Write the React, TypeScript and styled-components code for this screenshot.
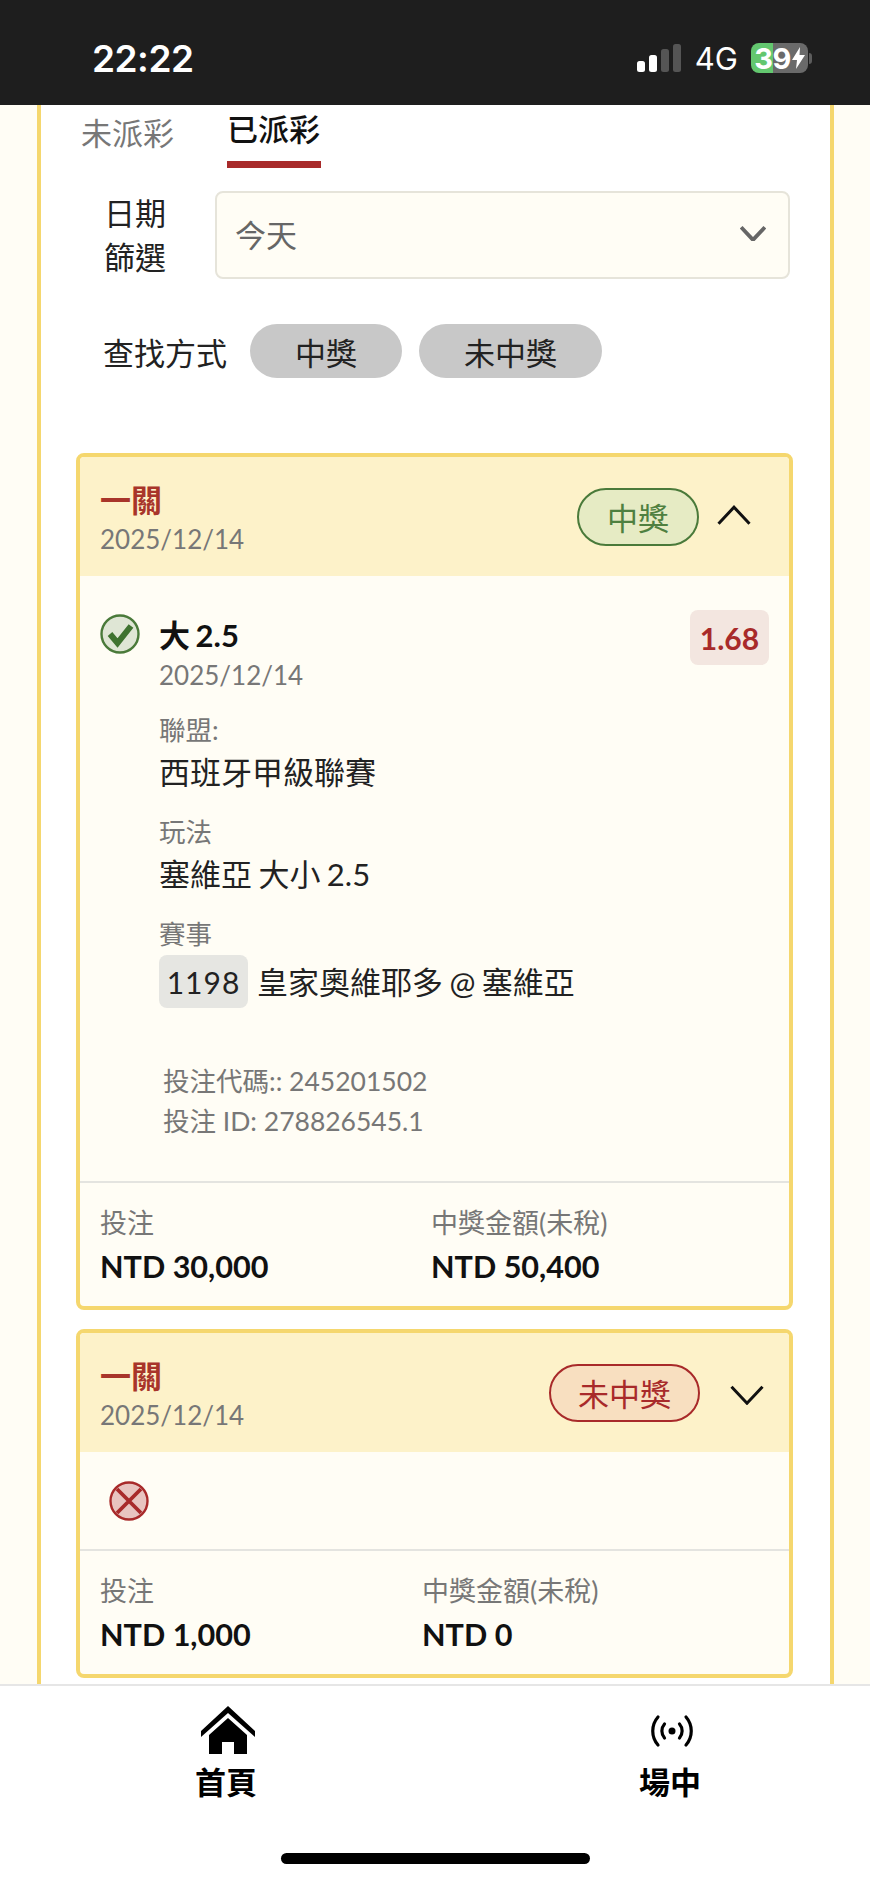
import React from 'react';
import styled, { createGlobalStyle } from 'styled-components';

const GlobalStyle = createGlobalStyle`
    html, body {
        margin: 0;
        padding: 0;
        background: #fffdf5;
    }

    * {
        box-sizing: border-box;
    }
`;

const Page = styled.div`
    width: 870px;
    height: 1882px;
    display: flex;
    flex-direction: column;
    overflow: hidden;
    background: #fffdf5;
    font-family: Lato, "Noto Sans CJK TC", sans-serif;
    color: #111;
`;

const StatusBar = styled.div`
    height: 105px;
    flex: none;
    background: #1e1e1e;
    display: flex;
    align-items: center;
    justify-content: space-between;
    padding: 0 58px 0 92px;
    color: #fff;
    font-family: Inter, "Liberation Sans", sans-serif;
`;

const Clock = styled.div`
    font-size: 37px;
    font-weight: 600;
    letter-spacing: -0.5px;
    margin-top: 11px;
`;

const StatusIcons = styled.div`
    display: flex;
    align-items: center;
    gap: 14px;
    margin-top: 11px;
`;

const NetworkLabel = styled.span`
    font-size: 31px;
    font-weight: 400;
`;

const BatteryWrap = styled.div`
    display: flex;
    align-items: center;
    gap: 1px;
    margin-left: -1px;
`;

const Battery = styled.div`
    width: 57px;
    height: 30px;
    border-radius: 8px;
    background: linear-gradient(90deg, #63c76f 0, #63c76f 39%, #6a6a6a 39%, #6a6a6a 100%);
    display: flex;
    align-items: center;
    justify-content: center;
    font-size: 29px;
    font-weight: 700;
    letter-spacing: -0.5px;
    gap: 1px;
`;

const BatteryNub = styled.div`
    width: 3px;
    height: 11px;
    border-radius: 0 3px 3px 0;
    background: #5c5c5c;
`;

const Main = styled.main`
    flex: 1;
    min-height: 0;
    overflow: hidden;
    padding: 0 36px 0 37px;
`;

const Panel = styled.div`
    height: 100%;
    background: #fff;
    border-left: 4px solid #f5d76e;
    border-right: 4px solid #f5d76e;
`;

const Tabs = styled.div`
    height: 63px;
    display: flex;
    gap: 53px;
    padding-left: 40px;
`;

const Tab = styled.div<{ $active?: boolean }>`
    width: ${p => (p.$active ? '94px' : '93px')};
    height: 63px;
    padding-top: ${p => (p.$active ? '3px' : '7px')};
    font-size: 31px;
    line-height: 42px;
    white-space: nowrap;
    font-weight: ${p => (p.$active ? 500 : 400)};
    color: ${p => (p.$active ? '#111' : '#777')};
    border-bottom: ${p => (p.$active ? '7px solid #a82a2a' : 'none')};
`;

const FilterRow = styled.div`
    margin-top: 23px;
    display: flex;
    align-items: center;
    padding-left: 63px;
    gap: 49px;
`;

const FilterLabel = styled.div`
    width: 62px;
    font-size: 31px;
    line-height: 44px;
    color: #222;
`;

const Select = styled.div`
    width: 575px;
    height: 88px;
    border: 2px solid #e6e4da;
    border-radius: 8px;
    background: #fffdf5;
    display: flex;
    align-items: center;
    justify-content: space-between;
    padding: 0 22px 3px 18px;
    font-size: 31px;
    color: #666;
`;

const SearchRow = styled.div`
    margin-top: 45px;
    display: flex;
    align-items: center;
    padding-left: 62px;
    gap: 17px;
`;

const SearchLabel = styled.div`
    font-size: 31px;
    color: #222;
    margin-right: 6px;
`;

const FilterPill = styled.div<{ $width: number }>`
    width: ${p => p.$width}px;
    height: 54px;
    border-radius: 27px;
    background: #c8c8c8;
    display: flex;
    align-items: center;
    justify-content: center;
    font-size: 31px;
    color: #222;
`;

const CardList = styled.div`
    margin: 75px 37px 0 35px;
    display: flex;
    flex-direction: column;
    gap: 19px;
`;

const Card = styled.section`
    border: 4px solid #f5d76e;
    border-radius: 8px;
    background: #fffdf5;
    overflow: hidden;
`;

const CardHeader = styled.header`
    height: 119px;
    background: #fdf2c9;
    display: flex;
    align-items: center;
    justify-content: space-between;
    padding: 0 0 0 20px;
`;

const HeaderText = styled.div`
    padding-top: 7px;
`;

const CardTitle = styled.div`
    font-size: 31px;
    line-height: 38px;
    font-weight: 700;
    color: #a8352a;
`;

const DateText = styled.div`
    font-size: 26px;
    line-height: 40px;
    color: #777;
`;

const HeaderRight = styled.div<{ $right: number }>`
    display: flex;
    align-items: center;
    gap: ${p => (p.$right === 38 ? 18 : 30)}px;
    padding-right: ${p => p.$right}px;
`;

const ChevronSlot = styled.div<{ $shift: number }>`
    margin-top: ${p => p.$shift}px;
`;

const StatusPill = styled.div<{ $won?: boolean }>`
    width: ${p => (p.$won ? '122px' : '151px')};
    height: 58px;
    border-radius: 29px;
    border: 2px solid ${p => (p.$won ? '#4a7a3a' : '#a82a2a')};
    background: ${p => (p.$won ? '#e6ebc4' : '#f8dfc0')};
    color: ${p => (p.$won ? '#4f8040' : '#a82a2a')};
    display: flex;
    align-items: center;
    justify-content: center;
    font-size: 31px;
`;

const BetBody = styled.div`
    position: relative;
    display: flex;
    gap: 19px;
    padding: 38px 0 40px 20px;
`;

const BetMain = styled.div`
    flex: 1;
`;

const BetTitle = styled.div`
    font-size: 31px;
    line-height: 41px;
    margin-bottom: -1px;
    font-weight: 700;
    word-spacing: -2px;
    padding-top: 1px;
    color: #111;
`;

const InfoLabel = styled.div`
    font-size: 26.5px;
    line-height: 34px;
    color: #777;
    margin-top: 18px;
`;

const InfoValue = styled.div`
    display: flex;
    align-items: center;
    font-size: 31px;
    line-height: 50px;
    word-spacing: -1.5px;
    color: #222;
`;

const EventRow = styled(InfoValue)`
    margin-top: 4px;
`;

const EventChip = styled.span`
    width: 89px;
    height: 53px;
    margin-right: 9px;
    border-radius: 8px;
    background: #e6e6e2;
    display: flex;
    align-items: center;
    justify-content: center;
    font-size: 30px;
    letter-spacing: 1px;
`;

const OddsBadge = styled.div`
    position: absolute;
    top: 34px;
    right: 20px;
    width: 79px;
    height: 55px;
    border-radius: 8px;
    background: #f3e6e0;
    color: #a82a2a;
    font-size: 30px;
    font-weight: 700;
    display: flex;
    align-items: center;
    justify-content: center;
`;

const BetCodes = styled.div`
    margin: 53px 0 0 4px;
    font-size: 26.5px;
    line-height: 40px;
    color: #777;
`;

const LostBody = styled.div`
    height: 97px;
    padding: 29px 0 0 29px;
`;

const CardFooter = styled.footer<{ $column: number }>`
    border-top: 2px solid #e4e4e0;
    display: grid;
    grid-template-columns: ${p => p.$column}px 1fr;
    padding: 19px 20px 15px;
`;

const AmountLabel = styled.div`
    font-size: 27px;
    line-height: 41px;
    color: #777;
`;

const AmountValue = styled.div`
    font-size: 30.6px;
    line-height: 48px;
    font-weight: 700;
    color: #111;
`;

const BottomNav = styled.nav`
    position: relative;
    height: 198px;
    flex: none;
    background: #fff;
    border-top: 2px solid #e6e6e6;
    display: flex;
    padding: 20px 0 0 150px;
`;

const NavItem = styled.div<{ $width: number }>`
    width: ${p => p.$width}px;
    height: 96px;
    display: flex;
    flex-direction: column;
    align-items: center;
    justify-content: space-between;
    font-size: 31px;
    font-weight: 700;
    line-height: 40px;
    color: #000;
`;

const NavGap = styled.div`
    width: 292px;
`;

const HomeIndicator = styled.div`
    position: absolute;
    left: 281px;
    bottom: 18px;
    width: 309px;
    height: 11px;
    border-radius: 6px;
    background: #000;
`;

const Svg = styled.svg`
    display: block;
    flex: none;
`;

const HomeSvg = styled(Svg)`
    margin-left: 4px;
`;

const LiveSvg = styled(Svg)`
    margin-left: 3px;
`;

const Chevron = ({ up, width, color, weight }: { up?: boolean; width: number; color: string; weight: number }) => (
    <Svg width={width} height={width * 0.6} viewBox="0 0 34 20" fill="none">
        <path
            d={up ? 'M1.5 18.5 L17 2 L32.5 18.5' : 'M1.5 1.5 L17 18 L32.5 1.5'}
            stroke={color}
            strokeWidth={weight}
        />
    </Svg>
);

const CheckIcon = () => (
    <Svg width="40" height="40" viewBox="0 0 40 40">
        <circle cx="20" cy="20" r="18.5" fill="#dfe6d5" stroke="#4a7a3a" strokeWidth="2.4" />
        <path d="M10 20 L17.5 29 L31 12" fill="none" stroke="#3f7330" strokeWidth="6" />
    </Svg>
);

const CrossIcon = () => (
    <Svg width="40" height="40" viewBox="0 0 40 40">
        <circle cx="20" cy="20" r="18.5" fill="#e8c4c0" stroke="#a82a2a" strokeWidth="2.4" />
        <path d="M8 8 L32 32 M32 8 L8 32" fill="none" stroke="#a82a2a" strokeWidth="3.8" />
    </Svg>
);

const App = () => (
    <Page>
        <GlobalStyle />
        <StatusBar>
            <Clock>22:22</Clock>
            <StatusIcons>
                <Svg width="44" height="28" viewBox="0 0 44 28">
                    <rect x="0" y="17" width="8" height="11" rx="2.5" fill="#fff" />
                    <rect x="12" y="11" width="8" height="17" rx="2.5" fill="#fff" />
                    <rect x="24" y="5" width="8" height="23" rx="2.5" fill="#555" />
                    <rect x="36" y="0" width="8" height="28" rx="2.5" fill="#555" />
                </Svg>
                <NetworkLabel>4G</NetworkLabel>
                <BatteryWrap>
                    <Battery>
                        39
                        <Svg width="13" height="22" viewBox="0 0 13 22">
                            <path d="M8 0 L0 13 H5 L4 22 L13 8 H7.5 Z" fill="#fff" />
                        </Svg>
                    </Battery>
                    <BatteryNub />
                </BatteryWrap>
            </StatusIcons>
        </StatusBar>
        <Main>
            <Panel>
                <Tabs>
                    <Tab>未派彩</Tab>
                    <Tab $active>已派彩</Tab>
                </Tabs>
                <FilterRow>
                    <FilterLabel>日期篩選</FilterLabel>
                    <Select>
                        今天
                        <Chevron width={26} color="#666" weight={5} />
                    </Select>
                </FilterRow>
                <SearchRow>
                    <SearchLabel>查找方式</SearchLabel>
                    <FilterPill $width={152}>中獎</FilterPill>
                    <FilterPill $width={183}>未中獎</FilterPill>
                </SearchRow>
                <CardList>
                    <Card>
                        <CardHeader>
                            <HeaderText>
                                <CardTitle>一關</CardTitle>
                                <DateText>2025/12/14</DateText>
                            </HeaderText>
                            <HeaderRight $right={38}>
                                <StatusPill $won>中獎</StatusPill>
                                <ChevronSlot $shift={-2}>
                                    <Chevron up width={34} color="#111" weight={3} />
                                </ChevronSlot>
                            </HeaderRight>
                        </CardHeader>
                        <BetBody>
                            <CheckIcon />
                            <BetMain>
                                <BetTitle>大 2.5</BetTitle>
                                <DateText>2025/12/14</DateText>
                                <InfoLabel>聯盟:</InfoLabel>
                                <InfoValue>西班牙甲級聯賽</InfoValue>
                                <InfoLabel>玩法</InfoLabel>
                                <InfoValue>塞維亞 大小 2.5</InfoValue>
                                <InfoLabel>賽事</InfoLabel>
                                <EventRow>
                                    <EventChip>1198</EventChip>
                                    皇家奧維耶多 @ 塞維亞
                                </EventRow>
                                <BetCodes>
                                    投注代碼:: 245201502
                                    <br />
                                    投注 ID: 278826545.1
                                </BetCodes>
                            </BetMain>
                            <OddsBadge>1.68</OddsBadge>
                        </BetBody>
                        <CardFooter $column={331}>
                            <div>
                                <AmountLabel>投注</AmountLabel>
                                <AmountValue>NTD 30,000</AmountValue>
                            </div>
                            <div>
                                <AmountLabel>中獎金額(未稅)</AmountLabel>
                                <AmountValue>NTD 50,400</AmountValue>
                            </div>
                        </CardFooter>
                    </Card>
                    <Card>
                        <CardHeader>
                            <HeaderText>
                                <CardTitle>一關</CardTitle>
                                <DateText>2025/12/14</DateText>
                            </HeaderText>
                            <HeaderRight $right={25}>
                                <StatusPill>未中獎</StatusPill>
                                <ChevronSlot $shift={5}>
                                    <Chevron width={34} color="#111" weight={3} />
                                </ChevronSlot>
                            </HeaderRight>
                        </CardHeader>
                        <LostBody>
                            <CrossIcon />
                        </LostBody>
                        <CardFooter $column={322}>
                            <div>
                                <AmountLabel>投注</AmountLabel>
                                <AmountValue>NTD 1,000</AmountValue>
                            </div>
                            <div>
                                <AmountLabel>中獎金額(未稅)</AmountLabel>
                                <AmountValue>NTD 0</AmountValue>
                            </div>
                        </CardFooter>
                    </Card>
                </CardList>
            </Panel>
        </Main>
        <BottomNav>
            <NavItem $width={152}>
                <HomeSvg width="54" height="48" viewBox="0 0 54 48">
                    <path d="M27 0 L54 25 V31 L27 7 L0 31 V25 Z" fill="#000" />
                    <path d="M27 12 L46 29 V48 H33 V36 H21 V48 H8 V29 Z" fill="#000" />
                </HomeSvg>
                首頁
            </NavItem>
            <NavGap />
            <NavItem $width={152}>
                <LiveSvg width="42" height="48" viewBox="0 0 42 48" fill="none" stroke="#000" strokeWidth="3.2" strokeLinecap="round">
                    <circle cx="21" cy="25" r="3.5" fill="#000" stroke="none" />
                    <path d="M13.5 18 C10 22 10 28 13.5 32 M28.5 18 C32 22 32 28 28.5 32" />
                    <path d="M7 11 C0 19 0 31 7 39 M35 11 C42 19 42 31 35 39" />
                </LiveSvg>
                場中
            </NavItem>
            <HomeIndicator />
        </BottomNav>
    </Page>
);

export default App;
